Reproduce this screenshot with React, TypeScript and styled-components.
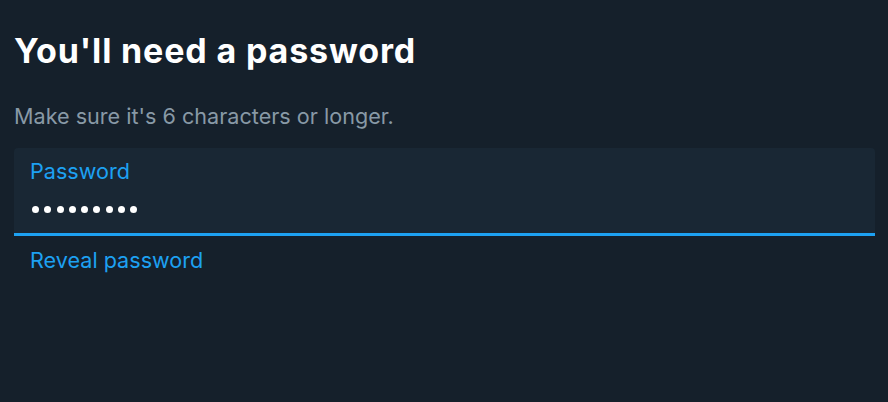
import React from "react";
import styled, { createGlobalStyle } from "styled-components";

const Global = createGlobalStyle`
  html, body { margin: 0; padding: 0; background: #15202b; }
  body { font-family: Inter, "Noto Sans", "Liberation Sans", sans-serif; }
`;

const Page = styled.div`
  width: 888px;
  height: 402px;
  box-sizing: border-box;
  padding: 31px 13px 0 14px;
  background: #15202b;
  display: flex;
  flex-direction: column;
`;

const Title = styled.h1`
  margin: 0;
  color: #ffffff;
  font-size: 34px;
  line-height: 40px;
  letter-spacing: 0.85px;
  font-weight: 700;
`;

const Subtitle = styled.p`
  margin: 31px 0 0;
  color: #8899a6;
  font-size: 21.6px;
  line-height: 28px;
`;

const Field = styled.label`
  margin-top: 18px;
  display: flex;
  flex-direction: column;
  height: 88px;
  box-sizing: border-box;
  padding: 9px 16px 0;
  background: #192734;
  border-radius: 4px 4px 0 0;
  border-bottom: 3px solid #1da1f2;
`;

const Label = styled.span`
  color: #1da1f2;
  font-size: 21.6px;
  line-height: 28px;
`;

const Dots = styled.div`
  margin: 21px 0 0 2px;
  display: flex;
  gap: 5.3px;
`;

const Dot = styled.span`
  width: 7px;
  height: 7px;
  border-radius: 50%;
  background: #ffffff;
`;

const Reveal = styled.a`
  margin: 10px 0 0 16px;
  align-self: flex-start;
  color: #1da1f2;
  font-size: 21.6px;
  line-height: 28px;
  text-decoration: none;
`;

export default function App() {
  return (
    <>
      <Global />
      <Page>
        <Title>You'll need a password</Title>
        <Subtitle>Make sure it's 6 characters or longer.</Subtitle>
        <Field>
          <Label>Password</Label>
          <Dots>
            {Array.from({ length: 9 }).map((_, i) => (
              <Dot key={i} />
            ))}
          </Dots>
        </Field>
        <Reveal href="#">Reveal password</Reveal>
      </Page>
    </>
  );
}
